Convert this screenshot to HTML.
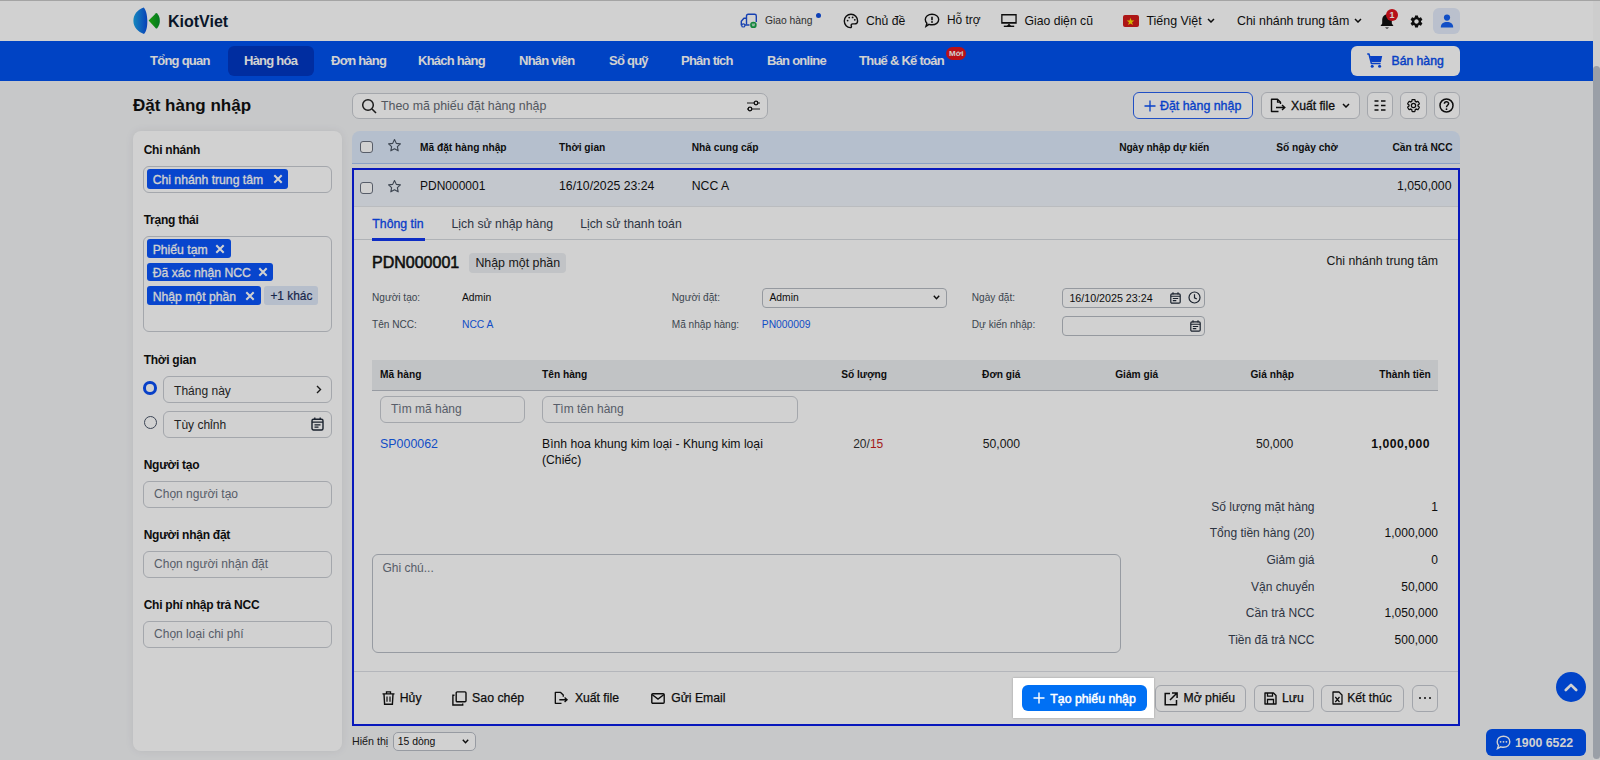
<!DOCTYPE html>
<html><head><meta charset="utf-8">
<style>
*{box-sizing:border-box;margin:0;padding:0}
html,body{width:1600px;height:760px;overflow:hidden}
body{background:#f3f4f6;font-family:"Liberation Sans",sans-serif;color:#111;position:relative}
.a{position:absolute}
.t{position:absolute;white-space:nowrap;line-height:1}
#top{left:0;top:0;width:1593px;height:41px;background:#fff;border-top:1px solid #c8c8c8}
#nav{left:0;top:41px;width:1593px;height:40px;background:#0052f0}
#sb{left:1593px;top:0;width:7px;height:760px;background:#fbfbfb;border-top:1px solid #c8c8c8}
#thumb{left:1593px;top:66px;width:7px;height:693px;background:#bcc2cc;border-radius:3.5px}
.nv{color:#fff;font-weight:700;font-size:13px;letter-spacing:-0.75px}
#overlay{left:0;top:0;width:1600px;height:760px;background:rgba(0,0,0,0.18)}
</style></head><body>
<div id="top" class="a"></div>
<div id="nav" class="a"></div>
<div id="sb" class="a"></div>
<div id="thumb" class="a"></div>

<!-- logo -->
<svg class="a" style="left:133px;top:7px" width="28" height="28" viewBox="0 0 28 28">
  <defs><linearGradient id="lg1" x1="0" y1="0" x2="1" y2="0"><stop offset="0" stop-color="#1ba6e8"/><stop offset="1" stop-color="#0a4fe0"/></linearGradient>
  <linearGradient id="lg2" x1="0" y1="0" x2="1" y2="0"><stop offset="0" stop-color="#1fbf10"/><stop offset="1" stop-color="#06902a"/></linearGradient></defs>
  <path d="M10.7 0.6 C4 3 0.4 8 0.4 14 C0.4 20 5 25 11 27 C14 24 14.4 18 14.3 13.5 C14.2 8 13 3 10.7 0.6 Z" fill="url(#lg1)"/>
  <path d="M15.6 13.6 L23 6.3 Q23.6 5.8 24.2 6.5 C26.2 9 26.8 11 26.8 13.8 C26.8 16.5 26.2 18.8 24.2 21.2 Q23.6 21.9 23 21.4 Z" fill="url(#lg2)"/>
</svg>
<div class="t" style="left:168px;top:13.8px;font-size:16px;font-weight:700;color:#0b1a33">KiotViet</div>

<!-- nav -->
<div class="a" style="left:228px;top:46px;width:86px;height:30px;background:#0038c4;border-radius:6px"></div>
<div class="t nv" style="left:150px;top:54.2px">Tổng quan</div>
<div class="t nv" style="left:244px;top:54.2px">Hàng hóa</div>
<div class="t nv" style="left:331px;top:54.2px">Đơn hàng</div>
<div class="t nv" style="left:418px;top:54.2px">Khách hàng</div>
<div class="t nv" style="left:519px;top:54.2px">Nhân viên</div>
<div class="t nv" style="left:609px;top:54.2px">Sổ quỹ</div>
<div class="t nv" style="left:681px;top:54.2px">Phân tích</div>
<div class="t nv" style="left:767px;top:54.2px">Bán online</div>
<div class="t nv" style="left:859px;top:54.2px">Thuế &amp; Kế toán</div>


<!-- header right -->
<svg class="a" style="left:740px;top:13px" width="18" height="15" viewBox="0 0 18 15">
  <path d="M6.5 11.6 V3 Q6.5 1.3 8.2 1.3 H14.6 Q16.3 1.3 16.3 3 V9" fill="none" stroke="#1c4fd8" stroke-width="1.4"/>
  <path d="M6.5 5.3 H3.9 L1.3 8.3 V12 H6.5 H9.5" fill="none" stroke="#1c4fd8" stroke-width="1.4" stroke-linejoin="round"/>
  <circle cx="3.3" cy="12.4" r="1.6" fill="#fff" stroke="#1c4fd8" stroke-width="1.2"/>
  <circle cx="13.4" cy="12" r="3.3" fill="#17a34a"/>
  <path d="M11.8 11.2 H15 M12.2 12.7 H14.6" stroke="#fff" stroke-width="0.9"/>
</svg>
<div class="t" style="left:765px;top:16px;font-size:10.3px;color:#3a3a3a">Giao hàng</div>
<div class="a" style="left:816px;top:12.5px;width:5px;height:5px;border-radius:50%;background:#0f4ee0"></div>
<svg class="a" style="left:843px;top:13px" width="16" height="16" viewBox="0 0 16 16">
  <path d="M8 1.3 C4.2 1.3 1.3 4.3 1.3 8 C1.3 11.8 4.2 14.6 7.2 14.6 C8.4 14.6 8.7 13.8 8.3 12.9 C7.8 11.9 8.4 10.9 9.6 10.9 H11.6 C13.3 10.9 14.6 9.7 14.6 7.9 C14.6 4.3 11.8 1.3 8 1.3Z" fill="none" stroke="#111" stroke-width="1.4"/>
  <circle cx="4.6" cy="7.6" r="0.9" fill="#111"/><circle cx="6.2" cy="4.6" r="0.9" fill="#111"/><circle cx="9.6" cy="4.4" r="0.9" fill="#111"/><circle cx="11.8" cy="6.8" r="0.9" fill="#111"/>
</svg>
<div class="t" style="left:866px;top:15px;font-size:12.2px;color:#111">Chủ đề</div>
<svg class="a" style="left:924px;top:13px" width="16" height="15" viewBox="0 0 16 15">
  <path d="M8 1.3 C11.8 1.3 14.7 3.6 14.7 6.6 C14.7 9.6 11.8 11.8 8 11.8 C6.9 11.8 5.9 11.6 5 11.3 L2 13.3 L2.9 10.3 C1.9 9.3 1.3 8 1.3 6.6 C1.3 3.6 4.2 1.3 8 1.3Z" fill="none" stroke="#111" stroke-width="1.4"/>
  <path d="M8 3.8 V7.2" stroke="#111" stroke-width="1.6"/><circle cx="8" cy="9" r="0.9" fill="#111"/>
</svg>
<div class="t" style="left:947px;top:15px;font-size:11.9px;color:#111">Hỗ trợ</div>
<svg class="a" style="left:1000px;top:13px" width="18" height="15" viewBox="0 0 18 15">
  <path d="M1.2 1 H16.7 V10.8 H1.2 Z M2.5 2.4 V8.9 H15.4 V2.4 Z" fill="#111" fill-rule="evenodd"/>
  <path d="M9 10.5 L11.3 13.2 H6.7 Z" fill="#111"/><path d="M3.8 13.3 H14.2" stroke="#111" stroke-width="1.4"/>
</svg>
<div class="t" style="left:1024.5px;top:15px;font-size:12.2px;color:#111">Giao diện cũ</div>
<div class="a" style="left:1122.5px;top:15px;width:16.5px;height:11.5px;background:#d41c1c;border-radius:2px"></div>
<svg class="a" style="left:1126px;top:16.5px" width="9" height="9" viewBox="0 0 10 10"><path d="M5 0.8 L6.1 4 H9.3 L6.7 5.9 L7.7 9 L5 7.1 L2.3 9 L3.3 5.9 L0.7 4 H3.9Z" fill="#ffde00"/></svg>
<div class="t" style="left:1146.5px;top:15px;font-size:12.4px;color:#111">Tiếng Việt</div>
<svg class="a" style="left:1207px;top:18px" width="8" height="5" viewBox="0 0 8 5"><path d="M1 1 L4 4 L7 1" fill="none" stroke="#111" stroke-width="1.5"/></svg>
<div class="t" style="left:1237px;top:15px;font-size:12.4px;color:#111">Chi nhánh trung tâm</div>
<svg class="a" style="left:1354px;top:18px" width="8" height="5" viewBox="0 0 8 5"><path d="M1 1 L4 4 L7 1" fill="none" stroke="#111" stroke-width="1.5"/></svg>
<svg class="a" style="left:1379px;top:13px" width="16" height="17" viewBox="0 0 16 17">
  <path d="M8 1.5 C4.8 1.5 3.2 4 3.2 7 V10.5 L1.5 13 H14.5 L12.8 10.5 V7 C12.8 4 11.2 1.5 8 1.5Z" fill="#111"/>
  <path d="M6 14.5 Q8 16.8 10 14.5" fill="#111"/>
</svg>
<div class="a" style="left:1386px;top:9px;width:12px;height:12px;border-radius:50%;background:#e0141e"></div>
<div class="t" style="left:1389.5px;top:10.5px;font-size:9px;font-weight:700;color:#fff">1</div>
<svg class="a" style="left:1409px;top:14px" width="15" height="15" viewBox="0 0 24 24">
  <path fill="#111" d="M19.14 12.94c.04-.3.06-.61.06-.94 0-.32-.02-.64-.07-.94l2.03-1.58a.49.49 0 0 0 .12-.61l-1.92-3.32a.488.488 0 0 0-.59-.22l-2.39.96c-.5-.38-1.03-.7-1.62-.94l-.36-2.54a.484.484 0 0 0-.48-.41h-3.84c-.24 0-.43.17-.47.41l-.36 2.54c-.59.24-1.13.57-1.62.94l-2.39-.96c-.22-.08-.47 0-.59.22L2.74 8.87c-.12.21-.08.47.12.61l2.03 1.58c-.05.3-.09.63-.09.94s.02.64.07.94l-2.03 1.58a.49.49 0 0 0-.12.61l1.92 3.32c.12.22.37.29.59.22l2.39-.96c.5.38 1.03.7 1.62.94l.36 2.54c.05.24.24.41.48.41h3.84c.24 0 .44-.17.47-.41l.36-2.54c.59-.24 1.13-.56 1.62-.94l2.39.96c.22.08.47 0 .59-.22l1.92-3.32c.12-.22.07-.47-.12-.61l-2.01-1.58zM12 15.6c-1.98 0-3.6-1.62-3.6-3.6s1.62-3.6 3.6-3.6 3.6 1.62 3.6 3.6-1.62 3.6-3.6 3.6z"/>
</svg>
<div class="a" style="left:1433px;top:7.5px;width:26.5px;height:26.5px;border-radius:6px;background:#e3ebfa"></div>
<svg class="a" style="left:1440px;top:14px" width="14" height="14" viewBox="0 0 14 14">
  <circle cx="7" cy="3.6" r="3.1" fill="#1560f2"/><path d="M0.8 13.5 C0.8 9.5 3.5 8 7 8 C10.5 8 13.2 9.5 13.2 13.5Z" fill="#1560f2"/>
</svg>

<!-- nav badge + sell button -->
<div class="a" style="left:946px;top:47px;width:20px;height:13px;border-radius:7px;background:#e3141d"></div>
<div class="t" style="left:949px;top:49.5px;font-size:8px;font-weight:700;color:#fff">Mới</div>
<div class="a" style="left:1350.5px;top:45.5px;width:109px;height:30px;border-radius:6px;background:#fff"></div>
<svg class="a" style="left:1366px;top:53px" width="17" height="15" viewBox="0 0 17 15">
  <path d="M1.2 1 H3 L5.4 10.6 H14.6" fill="none" stroke="#0a4ff0" stroke-width="1.5" stroke-linejoin="round"/>
  <path d="M3.9 3 H16.2 L14.9 8.9 H5.3 Z" fill="#0a4ff0"/>
  <circle cx="6.2" cy="13.2" r="1.5" fill="#0a4ff0"/><circle cx="13.6" cy="13.2" r="1.5" fill="#0a4ff0"/>
</svg>
<div class="t" style="left:1391.5px;top:54.5px;font-size:12.2px;color:#0a4ff0;-webkit-text-stroke:0.45px #0a4ff0">Bán hàng</div>

<!-- title & search -->
<div class="t" style="left:133px;top:97.4px;font-size:17px;font-weight:700;color:#111">Đặt hàng nhập</div>
<div class="a" style="left:352px;top:92.5px;width:416px;height:26px;border:1px solid #c9ccd2;border-radius:7px;background:#fff"></div>
<svg class="a" style="left:361px;top:98px" width="17" height="16" viewBox="0 0 17 16"><circle cx="7" cy="7" r="5.3" fill="none" stroke="#222" stroke-width="1.5"/><path d="M11 11 L15 15" stroke="#222" stroke-width="1.6"/></svg>
<div class="t" style="left:381px;top:99.5px;font-size:12.4px;color:#666b74">Theo mã phiếu đặt hàng nhập</div>
<svg class="a" style="left:746px;top:100px" width="15" height="12" viewBox="0 0 15 12">
  <path d="M1 3 H14 M1 9 H14" stroke="#222" stroke-width="1.2"/>
  <circle cx="10" cy="3" r="1.8" fill="#fff" stroke="#111" stroke-width="1.3"/><circle cx="4" cy="9" r="1.8" fill="#fff" stroke="#111" stroke-width="1.3"/>
</svg>

<!-- toolbar -->
<div class="a" style="left:1133px;top:92px;width:120px;height:27px;border:1px solid #2a62f0;border-radius:6px;background:#fff"></div>
<svg class="a" style="left:1144px;top:100px" width="12" height="12" viewBox="0 0 12 12"><path d="M6 0.5 V11.5 M0.5 6 H11.5" stroke="#0a50f5" stroke-width="1.3"/></svg>
<div class="t" style="left:1160px;top:99.5px;font-size:12.4px;color:#0a50f5;-webkit-text-stroke:0.35px #0a50f5">Đặt hàng nhập</div>
<div class="a" style="left:1260.5px;top:92px;width:99px;height:27px;border:1px solid #c9ccd2;border-radius:6px;background:#fff"></div>
<svg class="a" style="left:1270px;top:98px" width="17" height="15" viewBox="0 0 17 15">
  <path d="M8.5 13.5 H1.5 V1.2 H7.5 L10.5 4.2 V6" fill="none" stroke="#111" stroke-width="1.4" stroke-linejoin="round"/>
  <path d="M7.5 1.2 V4.2 H10.5" fill="none" stroke="#111" stroke-width="1.2"/>
  <path d="M6 9.5 H14.5 M12 7 L14.8 9.5 L12 12" fill="none" stroke="#111" stroke-width="1.4"/>
</svg>
<div class="t" style="left:1291px;top:99.5px;font-size:12.2px;color:#111;-webkit-text-stroke:0.3px #111">Xuất file</div>
<svg class="a" style="left:1342px;top:103px" width="8" height="5" viewBox="0 0 8 5"><path d="M1 1 L4 4 L7 1" fill="none" stroke="#111" stroke-width="1.5"/></svg>
<div class="a" style="left:1367px;top:92px;width:26px;height:27px;border:1px solid #c9ccd2;border-radius:6px;background:#fff"></div>
<svg class="a" style="left:1374px;top:100px" width="12" height="11" viewBox="0 0 12 11"><path d="M0.5 1 H4.5 M7 1 H11.5 M0.5 5.5 H4.5 M7 5.5 H11.5 M0.5 10 H4.5 M7 10 H11.5" stroke="#111" stroke-width="1.4"/></svg>
<div class="a" style="left:1400px;top:92px;width:26.5px;height:27px;border:1px solid #c9ccd2;border-radius:6px;background:#fff"></div>
<svg class="a" style="left:1405.5px;top:98px" width="15" height="15" viewBox="0 0 24 24">
  <path fill="none" stroke="#111" stroke-width="2" d="M19.14 12.94c.04-.3.06-.61.06-.94 0-.32-.02-.64-.07-.94l2.03-1.58a.49.49 0 0 0 .12-.61l-1.92-3.32a.488.488 0 0 0-.59-.22l-2.39.96c-.5-.38-1.030-.7-1.62-.94l-.36-2.54a.484.484 0 0 0-.48-.41h-3.84c-.24 0-.43.17-.47.41l-.36 2.54c-.59.24-1.13.57-1.620.94l-2.39-.96c-.22-.08-.47 0-.59.22L2.74 8.87c-.12.21-.08.47.12.61l2.03 1.58c-.05.3-.09.63-.09.94s.02.64.07.94l-2.03 1.58a.49.49 0 0 0-.12.61l1.92 3.32c.12.22.37.29.59.22l2.39-.96c.5.38 1.03.7 1.62.94l.36 2.54c.05.24.24.41.48.41h3.84c.24 0 .44-.17.47-.41l.36-2.54c.59-.24 1.13-.56 1.62-.94l2.39.96c.22.08.47 0 .59-.22l1.92-3.32c.12-.22.07-.47-.12-.61l-2.01-1.58z"/>
  <circle cx="12" cy="12" r="3.4" fill="none" stroke="#111" stroke-width="2"/>
</svg>
<div class="a" style="left:1433.5px;top:92px;width:26.5px;height:27px;border:1px solid #c9ccd2;border-radius:6px;background:#fff"></div>
<svg class="a" style="left:1439px;top:98px" width="15" height="15" viewBox="0 0 15 15"><circle cx="7.5" cy="7.5" r="6.5" fill="none" stroke="#111" stroke-width="1.5"/><path d="M5.4 5.8 C5.4 3.2 9.6 3.2 9.6 5.6 C9.6 7.3 7.5 7.3 7.5 9.2" fill="none" stroke="#111" stroke-width="1.5"/><circle cx="7.5" cy="11.2" r="0.9" fill="#111"/></svg>

<!-- sidebar -->
<div class="a" style="left:133px;top:131px;width:209.0px;height:620.0px;background:#fff;border-radius:8px;box-shadow:0 0 10px rgba(0,0,0,0.07)"></div>
<div class="t" style="left:143.7px;top:144.3px;font-size:12px;letter-spacing:-0.25px;color:#111;font-weight:700;">Chi nhánh</div>
<div class="a" style="left:143px;top:166px;width:189px;height:27px;border:1px solid #c8ccd2;border-radius:6px"></div>
<div class="a" style="left:147px;top:169.2px;width:141.0px;height:19.6px;background:#0a55fa;border-radius:3px"></div>
<div class="t" style="left:152.7px;top:174.4px;font-size:12.2px;color:#fff;-webkit-text-stroke:0.3px #fff;">Chi nhánh trung tâm</div>
<svg class="a" style="left:273px;top:174.0px" width="10" height="10" viewBox="0 0 10 10"><path d="M1.3 1.3 L8.7 8.7 M8.7 1.3 L1.3 8.7" stroke="#fff" stroke-width="2"/></svg>
<div class="t" style="left:143.7px;top:213.8px;font-size:12px;letter-spacing:-0.25px;color:#111;font-weight:700;">Trạng thái</div>
<div class="a" style="left:143px;top:236px;width:189px;height:96px;border:1px solid #c8ccd2;border-radius:6px"></div>
<div class="a" style="left:147px;top:239.2px;width:83.5px;height:19.1px;background:#0a55fa;border-radius:3px"></div>
<div class="t" style="left:152.7px;top:244.1px;font-size:12.2px;color:#fff;-webkit-text-stroke:0.3px #fff;">Phiếu tạm</div>
<svg class="a" style="left:215px;top:243.8px" width="10" height="10" viewBox="0 0 10 10"><path d="M1.3 1.3 L8.7 8.7 M8.7 1.3 L1.3 8.7" stroke="#fff" stroke-width="2"/></svg>
<div class="a" style="left:147px;top:262.6px;width:125.7px;height:18.8px;background:#0a55fa;border-radius:3px"></div>
<div class="t" style="left:152.7px;top:267.4px;font-size:12.2px;color:#fff;-webkit-text-stroke:0.3px #fff;">Đã xác nhận NCC</div>
<svg class="a" style="left:257.5px;top:267.0px" width="10" height="10" viewBox="0 0 10 10"><path d="M1.3 1.3 L8.7 8.7 M8.7 1.3 L1.3 8.7" stroke="#fff" stroke-width="2"/></svg>
<div class="a" style="left:147px;top:286px;width:113.6px;height:19.1px;background:#0a55fa;border-radius:3px"></div>
<div class="t" style="left:152.7px;top:290.9px;font-size:12.2px;color:#fff;-webkit-text-stroke:0.3px #fff;">Nhập một phần</div>
<svg class="a" style="left:245px;top:290.6px" width="10" height="10" viewBox="0 0 10 10"><path d="M1.3 1.3 L8.7 8.7 M8.7 1.3 L1.3 8.7" stroke="#fff" stroke-width="2"/></svg>
<div class="a" style="left:264.3px;top:286px;width:53.6px;height:19.1px;background:#dfe8f8;border-radius:3px"></div>
<div class="t" style="left:270.4px;top:291px;font-size:11.9px;color:#1e2f5c;-webkit-text-stroke:0.2px #1e2f5c;">+1 khác</div>
<div class="t" style="left:143.7px;top:354.2px;font-size:12px;letter-spacing:-0.25px;color:#111;font-weight:700;">Thời gian</div>
<div class="a" style="left:143.2px;top:381px;width:13.6px;height:13.6px;border:3.6px solid #0a4ff5;border-radius:50%"></div>
<div class="a" style="left:163px;top:376px;width:169px;height:27px;border:1px solid #c8ccd2;border-radius:6px"></div>
<div class="t" style="left:174.1px;top:384.5px;font-size:12px;color:#2a2a2a;">Tháng này</div>
<svg class="a" style="left:316px;top:385px" width="6" height="9" viewBox="0 0 6 9"><path d="M1 1 L4.5 4.5 L1 8" fill="none" stroke="#222" stroke-width="1.4"/></svg>
<div class="a" style="left:143.5px;top:415.8px;width:13.0px;height:13.0px;border:1.3px solid #4a5568;border-radius:50%"></div>
<div class="a" style="left:163px;top:411px;width:169px;height:27px;border:1px solid #c8ccd2;border-radius:6px"></div>
<div class="t" style="left:174.1px;top:419.3px;font-size:12px;color:#2a2a2a;">Tùy chỉnh</div>
<svg class="a" style="left:310.5px;top:417px" width="13" height="14" viewBox="0 0 13 14"><rect x="1" y="2.2" width="11" height="10.8" rx="1.5" fill="none" stroke="#1f2937" stroke-width="1.4"/><path d="M1 5.2 H12 M3.8 0.5 V3 M9.2 0.5 V3 M3.5 7.8 H9.5 M3.5 10.2 H7.5" stroke="#1f2937" stroke-width="1.3"/></svg>
<div class="t" style="left:143.7px;top:458.6px;font-size:12px;letter-spacing:-0.25px;color:#111;font-weight:700;">Người tạo</div>
<div class="a" style="left:143px;top:481px;width:189px;height:27px;border:1px solid #c8ccd2;border-radius:6px"></div>
<div class="t" style="left:154.1px;top:488.3px;font-size:12px;color:#6b7280;">Chọn người tạo</div>
<div class="t" style="left:143.7px;top:528.6px;font-size:12px;letter-spacing:-0.25px;color:#111;font-weight:700;">Người nhận đặt</div>
<div class="a" style="left:143px;top:551px;width:189px;height:27px;border:1px solid #c8ccd2;border-radius:6px"></div>
<div class="t" style="left:154.1px;top:558.3px;font-size:12px;color:#6b7280;">Chọn người nhận đặt</div>
<div class="t" style="left:143.7px;top:599.3px;font-size:12px;letter-spacing:-0.25px;color:#111;font-weight:700;">Chi phí nhập trả NCC</div>
<div class="a" style="left:143px;top:621px;width:189px;height:27px;border:1px solid #c8ccd2;border-radius:6px"></div>
<div class="t" style="left:154.1px;top:628.3px;font-size:12px;color:#6b7280;">Chọn loại chi phí</div>

<!-- table -->
<div class="a" style="left:352px;top:131px;width:1108.0px;height:33.0px;background:#dde9fa;border-radius:8px 8px 0 0;border-bottom:1px solid #a9c4f2"></div>
<div class="a" style="left:360.4px;top:141.2px;width:12.2px;height:12.2px;border:1.3px solid #6b7280;border-radius:3px;background:#fff"></div>
<svg class="a" style="left:386.5px;top:138px" width="15" height="15" viewBox="0 0 24 24"><path d="M12 2.5 L14.9 8.6 L21.5 9.4 L16.6 13.9 L17.9 20.5 L12 17.2 L6.1 20.5 L7.4 13.9 L2.5 9.4 L9.1 8.6Z" fill="none" stroke="#4b5563" stroke-width="1.8" stroke-linejoin="round"/></svg>
<div class="t" style="left:420.0px;top:142.9px;font-size:10.2px;color:#111;font-weight:700;">Mã đặt hàng nhập</div>
<div class="t" style="left:559.0px;top:142.9px;font-size:10.2px;color:#111;font-weight:700;">Thời gian</div>
<div class="t" style="left:691.7px;top:142.9px;font-size:10.2px;color:#111;font-weight:700;">Nhà cung cấp</div>
<div class="t" style="left:1119.2px;top:142.9px;font-size:10.2px;color:#111;font-weight:700;letter-spacing:-0.1px">Ngày nhập dự kiến</div>
<div class="t" style="left:1276.2px;top:142.9px;font-size:10.2px;color:#111;font-weight:700;">Số ngày chờ</div>
<div class="t" style="right:147.5px;top:142.9px;font-size:10.2px;color:#111;font-weight:700;">Cần trả NCC</div>
<div class="a" style="left:352px;top:168px;width:1108.0px;height:558.0px;border:2px solid #0a1ee6;background:#fff"></div>
<div class="a" style="left:354px;top:170px;width:1104.0px;height:36.5px;background:#eef3fb;border-bottom:1px solid #e3e6ea"></div>
<div class="a" style="left:360.4px;top:182.2px;width:12.2px;height:12.2px;border:1.3px solid #6b7280;border-radius:3px;background:#fff"></div>
<svg class="a" style="left:386.5px;top:179px" width="15" height="15" viewBox="0 0 24 24"><path d="M12 2.5 L14.9 8.6 L21.5 9.4 L16.6 13.9 L17.9 20.5 L12 17.2 L6.1 20.5 L7.4 13.9 L2.5 9.4 L9.1 8.6Z" fill="none" stroke="#4b5563" stroke-width="1.8" stroke-linejoin="round"/></svg>
<div class="t" style="left:420.0px;top:180.1px;font-size:12px;color:#111;">PDN000001</div>
<div class="t" style="left:559.0px;top:179.9px;font-size:12.25px;color:#111;">16/10/2025 23:24</div>
<div class="t" style="left:691.7px;top:179.9px;font-size:12.25px;color:#111;">NCC A</div>
<div class="t" style="right:148.5px;top:179.9px;font-size:12.25px;color:#111;">1,050,000</div>
<div class="a" style="left:354px;top:239.2px;width:1104.0px;height:1.0px;background:#d6d9de"></div>
<div class="t" style="left:372.3px;top:218.1px;font-size:12.3px;color:#0d4af5;-webkit-text-stroke:0.3px #0d4af5;">Thông tin</div>
<div class="a" style="left:372.3px;top:238.3px;width:52.5px;height:2.3px;background:#1238f0"></div>
<div class="t" style="left:451.5px;top:218.3px;font-size:12.25px;color:#374151;">Lịch sử nhập hàng</div>
<div class="t" style="left:580.2px;top:218.3px;font-size:12.25px;color:#374151;">Lịch sử thanh toán</div>
<div class="t" style="left:372.0px;top:254.8px;font-size:16px;color:#111;-webkit-text-stroke:0.55px #111">PDN000001</div>
<div class="a" style="left:469.1px;top:253.3px;width:96.6px;height:19.7px;background:#eceef2;border-radius:4px"></div>
<div class="t" style="left:475.4px;top:257.0px;font-size:12.4px;color:#222;">Nhập một phần</div>
<div class="t" style="right:162.0px;top:254.6px;font-size:12.3px;color:#222;">Chi nhánh trung tâm</div>
<div class="t" style="left:372.0px;top:292.7px;font-size:10.1px;color:#4b5563;">Người tạo:</div>
<div class="t" style="left:462.0px;top:292.5px;font-size:10.3px;color:#111;">Admin</div>
<div class="t" style="left:372.0px;top:320.2px;font-size:10.1px;color:#4b5563;">Tên NCC:</div>
<div class="t" style="left:462.0px;top:320.0px;font-size:10.3px;color:#1560f2;">NCC A</div>
<div class="t" style="left:671.8px;top:292.7px;font-size:10.1px;color:#4b5563;">Người đặt:</div>
<div class="a" style="left:761.75px;top:288.25px;width:185.0px;height:19.8px;border:1px solid #b6bbc3;border-radius:4px;background:#fff"></div>
<div class="t" style="left:769.5px;top:293.3px;font-size:10.3px;color:#111;">Admin</div>
<svg class="a" style="left:932.5px;top:295px" width="7" height="5" viewBox="0 0 7 5"><path d="M0.8 0.8 L3.5 3.8 L6.2 0.8" fill="none" stroke="#111" stroke-width="1.4"/></svg>
<div class="t" style="left:671.8px;top:320.2px;font-size:10.1px;color:#4b5563;">Mã nhập hàng:</div>
<div class="t" style="left:761.8px;top:320.0px;font-size:10.3px;color:#1560f2;">PN000009</div>
<div class="t" style="left:971.8px;top:292.7px;font-size:10.1px;color:#4b5563;">Ngày đặt:</div>
<div class="a" style="left:1061.6px;top:288.4px;width:143.1px;height:19.4px;border:1px solid #b6bbc3;border-radius:4px;background:#fff"></div>
<div class="t" style="left:1069.4px;top:292.9px;font-size:10.7px;color:#111;">16/10/2025 23:24</div>
<svg class="a" style="left:1170.3px;top:291.5px" width="11" height="12" viewBox="0 0 11 12"><rect x="0.8" y="1.8" width="9.4" height="9.4" rx="1.2" fill="none" stroke="#1f2937" stroke-width="1.2"/><path d="M0.8 4.3 H10.2 M3 0.3 V2.5 M8 0.3 V2.5 M2.8 6.5 H8.2 M2.8 8.6 H6.3" stroke="#1f2937" stroke-width="1.1"/></svg>
<svg class="a" style="left:1187.5px;top:291px" width="13" height="13" viewBox="0 0 13 13"><circle cx="6.5" cy="6.5" r="5.5" fill="none" stroke="#1f2937" stroke-width="1.2"/><path d="M6.5 3.3 V6.8 L8.8 8" fill="none" stroke="#1f2937" stroke-width="1.2"/></svg>
<div class="t" style="left:971.8px;top:320.2px;font-size:10.1px;color:#4b5563;">Dự kiến nhập:</div>
<div class="a" style="left:1061.6px;top:316.25px;width:143.1px;height:19.4px;border:1px solid #b6bbc3;border-radius:4px;background:#fff"></div>
<svg class="a" style="left:1189.5px;top:319.5px" width="11" height="12" viewBox="0 0 11 12"><rect x="0.8" y="1.8" width="9.4" height="9.4" rx="1.2" fill="none" stroke="#1f2937" stroke-width="1.2"/><path d="M0.8 4.3 H10.2 M3 0.3 V2.5 M8 0.3 V2.5 M2.8 6.5 H8.2 M2.8 8.6 H6.3" stroke="#1f2937" stroke-width="1.1"/></svg>
<div class="a" style="left:372px;top:360px;width:1066px;height:31px;background:#eceef1;border-bottom:1px solid #b9bec6"></div>
<div class="t" style="left:380.1px;top:370.1px;font-size:10.2px;color:#111;font-weight:700;">Mã hàng</div>
<div class="t" style="left:542.0px;top:370.1px;font-size:10.2px;color:#111;font-weight:700;">Tên hàng</div>
<div class="t" style="left:841.2px;top:370.1px;font-size:10.2px;color:#111;font-weight:700;">Số lượng</div>
<div class="t" style="right:579.6px;top:370.1px;font-size:10.2px;color:#111;font-weight:700;">Đơn giá</div>
<div class="t" style="left:1115.2px;top:370.1px;font-size:10.2px;color:#111;font-weight:700;">Giảm giá</div>
<div class="t" style="right:306.0px;top:370.1px;font-size:10.2px;color:#111;font-weight:700;">Giá nhập</div>
<div class="t" style="right:169.2px;top:370.1px;font-size:10.2px;color:#111;font-weight:700;">Thành tiền</div>
<div class="a" style="left:380px;top:396px;width:145px;height:27px;border:1px solid #c8ccd2;border-radius:6px"></div>
<div class="t" style="left:391.0px;top:403.2px;font-size:12px;color:#6b7280;">Tìm mã hàng</div>
<div class="a" style="left:542px;top:396px;width:255.5px;height:27px;border:1px solid #c8ccd2;border-radius:6px"></div>
<div class="t" style="left:553.0px;top:403.2px;font-size:12px;color:#6b7280;">Tìm tên hàng</div>
<div class="t" style="left:380.1px;top:437.9px;font-size:12.4px;color:#1560f2;">SP000062</div>
<div class="t" style="left:542.0px;top:438.1px;font-size:12.2px;color:#111;">Bình hoa khung kim loại - Khung kim loại</div>
<div class="t" style="left:542.0px;top:454.4px;font-size:12.2px;color:#111;">(Chiếc)</div>
<div class="t" style="left:853.2px;top:437.8px;font-size:12px;color:#333;">20/<span style="color:#c81e1e">15</span></div>
<div class="t" style="right:580.0px;top:437.7px;font-size:12.2px;color:#222;">50,000</div>
<div class="t" style="right:306.8px;top:437.7px;font-size:12.2px;color:#222;">50,000</div>
<div class="t" style="right:170.0px;top:437.7px;font-size:12.2px;color:#111;font-weight:700;letter-spacing:0.5px">1,000,000</div>
<div class="t" style="right:285.5px;top:500.6px;font-size:12px;color:#374151;">Số lượng mặt hàng</div>
<div class="t" style="right:162.0px;top:500.6px;font-size:12px;color:#111;">1</div>
<div class="t" style="right:285.5px;top:527.3px;font-size:12px;color:#374151;">Tổng tiền hàng (20)</div>
<div class="t" style="right:162.0px;top:527.3px;font-size:12px;color:#111;">1,000,000</div>
<div class="t" style="right:285.5px;top:554.1px;font-size:12px;color:#374151;">Giảm giá</div>
<div class="t" style="right:162.0px;top:554.1px;font-size:12px;color:#111;">0</div>
<div class="t" style="right:285.5px;top:580.6px;font-size:12px;color:#374151;">Vận chuyển</div>
<div class="t" style="right:162.0px;top:580.6px;font-size:12px;color:#111;">50,000</div>
<div class="t" style="right:285.5px;top:607.3px;font-size:12px;color:#374151;">Cần trả NCC</div>
<div class="t" style="right:162.0px;top:607.3px;font-size:12px;color:#111;">1,050,000</div>
<div class="t" style="right:285.5px;top:634.1px;font-size:12px;color:#374151;">Tiền đã trả NCC</div>
<div class="t" style="right:162.0px;top:634.1px;font-size:12px;color:#111;">500,000</div>
<div class="a" style="left:371.7px;top:553.9px;width:749.5px;height:99.6px;border:1px solid #b9bec6;border-radius:6px"></div>
<div class="t" style="left:382.4px;top:561.6px;font-size:12px;color:#6b7280;">Ghi chú...</div>
<div class="a" style="left:354px;top:671.2px;width:1104.0px;height:1.0px;background:#dcdfe4"></div>

<!-- footer buttons -->
<svg class="a" style="left:382px;top:691px" width="13" height="14" viewBox="0 0 13 14"><path d="M0.5 2.8 H12.5 M4.5 2.8 V0.9 H8.5 V2.8" fill="none" stroke="#111" stroke-width="1.3"/><path d="M2 3 L2.6 13.2 H10.4 L11 3" fill="none" stroke="#111" stroke-width="1.4"/><path d="M5 5.5 V10.8 M8 5.5 V10.8" stroke="#111" stroke-width="1.2"/></svg>
<div class="t" style="left:399.8px;top:691.9px;font-size:12.2px;color:#111;-webkit-text-stroke:0.25px #111">Hủy</div>
<svg class="a" style="left:451.5px;top:690.5px" width="15" height="15" viewBox="0 0 15 15"><rect x="4.2" y="0.9" width="9.8" height="9.8" rx="1" fill="none" stroke="#111" stroke-width="1.4"/><path d="M2.5 4.2 H0.9 V14 H10.7 V12.5" fill="none" stroke="#111" stroke-width="1.4"/></svg>
<div class="t" style="left:472.1px;top:691.9px;font-size:12.3px;color:#111;-webkit-text-stroke:0.25px #111">Sao chép</div>
<svg class="a" style="left:553.5px;top:691px" width="15" height="14" viewBox="0 0 17 15"><path d="M8.5 13.5 H1.5 V1.2 H7.5 L10.5 4.2 V6" fill="none" stroke="#111" stroke-width="1.5" stroke-linejoin="round"/><path d="M6 9.5 H14.5 M12 7 L14.8 9.5 L12 12" fill="none" stroke="#111" stroke-width="1.5"/></svg>
<div class="t" style="left:574.9px;top:691.9px;font-size:12.2px;color:#111;-webkit-text-stroke:0.25px #111">Xuất file</div>
<svg class="a" style="left:651px;top:692.5px" width="14" height="11" viewBox="0 0 14 11"><rect x="0.8" y="0.8" width="12.4" height="9.4" rx="1" fill="none" stroke="#111" stroke-width="1.4"/><path d="M1 1.5 L7 6 L13 1.5" fill="none" stroke="#111" stroke-width="1.4"/></svg>
<div class="t" style="left:671.2px;top:691.9px;font-size:12.2px;color:#111;-webkit-text-stroke:0.25px #111">Gửi Email</div>
<div class="a" style="left:1154.8px;top:685px;width:91.4px;height:26.8px;border:1px solid #c6cad1;border-radius:6px;background:#fff"></div>
<svg class="a" style="left:1164px;top:691.5px" width="14" height="14" viewBox="0 0 14 14"><path d="M6 1.5 H1.2 V12.8 H12.5 V8" fill="none" stroke="#111" stroke-width="1.5"/><path d="M8 0.9 H13.1 V6 M13 1 L6 8" fill="none" stroke="#111" stroke-width="1.5"/></svg>
<div class="t" style="left:1183.6px;top:691.9px;font-size:12.2px;color:#111;-webkit-text-stroke:0.25px #111">Mở phiếu</div>
<div class="a" style="left:1253.5px;top:685px;width:60.0px;height:26.8px;border:1px solid #c6cad1;border-radius:6px;background:#fff"></div>
<svg class="a" style="left:1264px;top:692px" width="13" height="13" viewBox="0 0 13 13"><path d="M1 1 H9.5 L12 3.5 V12 H1Z" fill="none" stroke="#111" stroke-width="1.4" stroke-linejoin="round"/><path d="M3.5 1 V4.2 H8.5 V1 M3.5 12 V7.5 H9.5 V12" fill="none" stroke="#111" stroke-width="1.3"/></svg>
<div class="t" style="left:1282.0px;top:691.9px;font-size:12.2px;color:#111;-webkit-text-stroke:0.25px #111">Lưu</div>
<div class="a" style="left:1321.4px;top:685px;width:83.1px;height:26.8px;border:1px solid #c6cad1;border-radius:6px;background:#fff"></div>
<svg class="a" style="left:1331.5px;top:691px" width="11" height="14" viewBox="0 0 11 14"><path d="M1 1 H7 L10 4 V13 H1Z" fill="none" stroke="#111" stroke-width="1.3" stroke-linejoin="round"/><path d="M3.3 6 L7.5 11 M7.5 6 L3.3 11" stroke="#111" stroke-width="1.2"/></svg>
<div class="t" style="left:1347.2px;top:691.9px;font-size:12.2px;color:#111;-webkit-text-stroke:0.25px #111">Kết thúc</div>
<div class="a" style="left:1412.2px;top:685px;width:25.5px;height:26.8px;border:1px solid #c6cad1;border-radius:6px;background:#fff"></div>
<div class="a" style="left:1419.0px;top:697px;width:2.4px;height:2.4px;background:#111;border-radius:50%"></div>
<div class="a" style="left:1423.8px;top:697px;width:2.4px;height:2.4px;background:#111;border-radius:50%"></div>
<div class="a" style="left:1428.6px;top:697px;width:2.4px;height:2.4px;background:#111;border-radius:50%"></div>
<div class="t" style="left:352.0px;top:735.9px;font-size:10.7px;color:#222;">Hiển thị</div>
<div class="a" style="left:393.4px;top:731.9px;width:83.1px;height:19.4px;border:1px solid #b9bec6;border-radius:5px;background:#fff"></div>
<div class="t" style="left:397.7px;top:736.5px;font-size:10.4px;color:#111;">15 dòng</div>
<svg class="a" style="left:461.5px;top:739px" width="7" height="5" viewBox="0 0 7 5"><path d="M0.8 0.8 L3.5 3.8 L6.2 0.8" fill="none" stroke="#111" stroke-width="1.4"/></svg>
<div class="a" style="left:1555.7px;top:672.3px;width:30.0px;height:30.0px;background:#0052f5;border-radius:50%"></div>
<svg class="a" style="left:1563.5px;top:681.5px" width="14" height="10" viewBox="0 0 14 10"><path d="M1.8 8 L7 2.8 L12.2 8" fill="none" stroke="#fff" stroke-width="2.6" stroke-linecap="round" stroke-linejoin="round"/></svg>
<div class="a" style="left:1486px;top:729px;width:99.5px;height:26.5px;background:#0052f5;border-radius:6px"></div>
<svg class="a" style="left:1496px;top:735px" width="15" height="15" viewBox="0 0 15 15"><path d="M7.5 1.2 C11.2 1.2 13.8 3.7 13.8 6.8 C13.8 9.9 11.2 12.3 7.5 12.3 C6.5 12.3 5.6 12.1 4.8 11.8 L1.5 13.6 L2.5 10.5 C1.6 9.5 1.2 8.2 1.2 6.8 C1.2 3.7 3.8 1.2 7.5 1.2Z" fill="none" stroke="#fff" stroke-width="1.4"/><circle cx="4.6" cy="6.8" r="0.9" fill="#fff"/><circle cx="7.5" cy="6.8" r="0.9" fill="#fff"/><circle cx="10.4" cy="6.8" r="0.9" fill="#fff"/></svg>
<div class="t" style="left:1515.0px;top:736.6px;font-size:12.3px;color:#fff;font-weight:700;">1900 6522</div>

<div id="overlay" class="a"></div>

<!-- highlight -->
<div class="a" style="left:1013px;top:678px;width:141px;height:40px;background:#fff;box-shadow:0 0 2px rgba(0,0,0,0.25)"></div>
<div class="a" style="left:1022px;top:685px;width:124.9px;height:26.4px;background:#0070f4;border-radius:6px"></div>
<svg class="a" style="left:1032.5px;top:692px" width="12" height="12" viewBox="0 0 12 12"><path d="M6 0.5 V11.5 M0.5 6 H11.5" stroke="#fff" stroke-width="1.45"/></svg>
<div class="t" style="left:1050.3px;top:693px;font-size:12.3px;color:#fff;-webkit-text-stroke:0.5px #fff;">Tạo phiếu nhập</div>
</body></html>
